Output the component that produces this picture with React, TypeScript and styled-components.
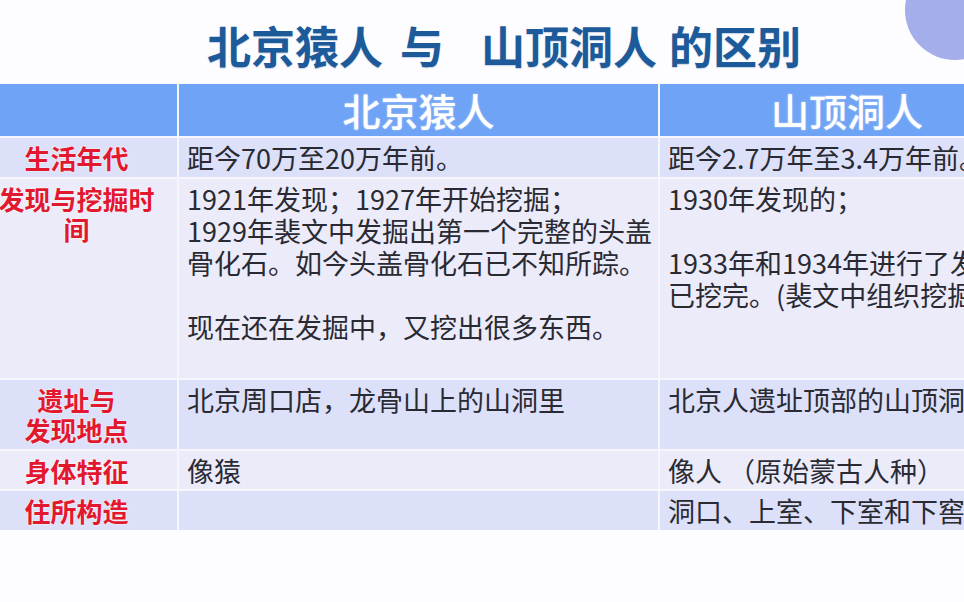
import React from 'react';
import styled, { createGlobalStyle } from 'styled-components';

const GlobalStyle = createGlobalStyle`
  html, body {
    margin: 0;
    padding: 0;
    background: #fdfcff;
    overflow: hidden;
  }
  body {
    font-family: 'Noto Sans CJK SC', 'Noto Sans', sans-serif;
  }
`;

const Page = styled.div`
  position: relative;
  width: 964px;
  height: 602px;
  overflow: hidden;
  background: #fdfcff;
`;

// decorative disc peeking in at the top right corner
const Disc = styled.div`
  position: absolute;
  top: -40px;
  left: 905px;
  width: 100px;
  height: 100px;
  border-radius: 50%;
  background: #a4aeea;
`;

const Title = styled.h1`
  margin: 0;
  height: 84px;
  box-sizing: border-box;
  padding: 5px 0 0 44px;
  display: flex;
  align-items: center;
  justify-content: center;
  font-size: 44px;
  font-weight: 700;
  line-height: 1;
  color: #1d5a99;
  white-space: nowrap;
  text-shadow: 0 1px 1px rgba(29, 90, 153, 0.25);
`;

const Word = styled.span<{ $gap?: number }>`
  margin-left: ${p => p.$gap || 0}px;
`;

const Table = styled.div`
  display: grid;
  grid-template-columns: 177px 479px 374px;
  grid-template-rows: 52px 39px 199px 69px 38px 39px;
  gap: 2px;
  width: 1034px;
  background: #f6f6fd;
`;

const HeadCell = styled.div`
  background: #6fa3f6;
  color: #fff;
  font-size: 38px;
  font-weight: 500;
  line-height: 52px;
  text-align: center;
  white-space: nowrap;
  text-shadow: 0 0 2px rgba(255, 255, 255, 0.6);
`;

const Cell = styled.div<{ $tone: 'dark' | 'light' }>`
  background: ${p => (p.$tone === 'dark' ? '#dce0f8' : '#ecebfa')};
  box-sizing: border-box;
  overflow: hidden;
`;

const LabelCell = styled(Cell)`
  display: flex;
  flex-direction: column;
  align-items: center;
  padding: 5px 24px 0 0;
  color: #e2182f;
  font-size: 26px;
  font-weight: 700;
  line-height: 30px;
  text-shadow: 0 0 2px #fff, 0 0 1px #fff;
  white-space: nowrap;
`;

const TextCell = styled(Cell)`
  padding: 4px 0 0 8px;
  color: #2a2a32;
  font-size: 27px;
  line-height: 32px;
  white-space: nowrap;
`;

const Line = styled.div`
  min-height: 32px;
`;

type Row = {
  label: string[];
  peking: string[];
  upper: string[];
  tone: 'dark' | 'light';
};

const rows: Row[] = [
  {
    label: ['生活年代'],
    peking: ['距今70万至20万年前。'],
    upper: ['距今2.7万年至3.4万年前。'],
    tone: 'dark',
  },
  {
    label: ['发现与挖掘时', '间'],
    peking: [
      '1921年发现；1927年开始挖掘；',
      '1929年裴文中发掘出第一个完整的头盖',
      '骨化石。如今头盖骨化石已不知所踪。',
      '',
      '现在还在发掘中，又挖出很多东西。',
    ],
    upper: ['1930年发现的；', '', '1933年和1934年进行了发掘，现', '已挖完。(裴文中组织挖掘)'],
    tone: 'light',
  },
  {
    label: ['遗址与', '发现地点'],
    peking: ['北京周口店，龙骨山上的山洞里'],
    upper: ['北京人遗址顶部的山顶洞'],
    tone: 'dark',
  },
  {
    label: ['身体特征'],
    peking: ['像猿'],
    upper: ['像人 （原始蒙古人种）'],
    tone: 'light',
  },
  {
    label: ['住所构造'],
    peking: [],
    upper: ['洞口、上室、下室和下窖'],
    tone: 'dark',
  },
];

const Lines: React.FC<{ items: string[] }> = ({ items }) => (
  <>
    {items.map((t, i) => (
      <Line key={i}>{t || '\u00a0'}</Line>
    ))}
  </>
);

const App: React.FC = () => {
  return (
    <Page>
      <GlobalStyle />
      <Disc />
      <Title>
        <Word>北京猿人</Word>
        <Word $gap={17}>与</Word>
        <Word $gap={37}>山顶洞人</Word>
        <Word $gap={12}>的区别</Word>
      </Title>
      <Table>
        <HeadCell />
        <HeadCell>北京猿人</HeadCell>
        <HeadCell>山顶洞人</HeadCell>
        {rows.map(r => (
          <React.Fragment key={r.label.join('')}>
            <LabelCell $tone={r.tone}>
              {r.label.map(l => (
                <div key={l}>{l}</div>
              ))}
            </LabelCell>
            <TextCell $tone={r.tone}>
              <Lines items={r.peking} />
            </TextCell>
            <TextCell $tone={r.tone}>
              <Lines items={r.upper} />
            </TextCell>
          </React.Fragment>
        ))}
      </Table>
    </Page>
  );
};

export default App;
